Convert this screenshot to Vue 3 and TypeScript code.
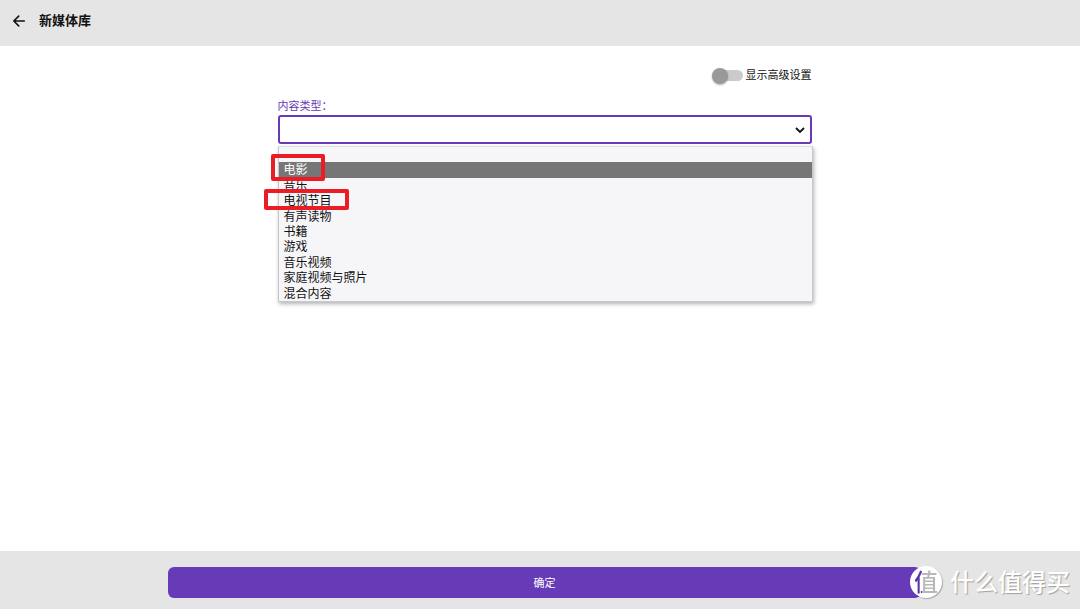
<script setup lang="ts">
import { ref } from 'vue'

interface ContentType {
  value: string
  label: string
  mark?: string
}

const contentTypes: ContentType[] = [
  { value: '', label: '' },
  { value: 'movies', label: '电影', mark: 'mark-movies' },
  { value: 'music', label: '音乐' },
  { value: 'tvshows', label: '电视节目', mark: 'mark-shows' },
  { value: 'audiobooks', label: '有声读物' },
  { value: 'books', label: '书籍' },
  { value: 'games', label: '游戏' },
  { value: 'musicvideos', label: '音乐视频' },
  { value: 'homevideos', label: '家庭视频与照片' },
  { value: 'mixed', label: '混合内容' },
]

const selected = ref('')
const highlighted = ref('movies')
const advanced = ref(false)
</script>

<template>
  <div class="page">
    <header class="top">
      <button class="back" type="button" aria-label="返回">
        <svg viewBox="0 0 14 14" width="14" height="14" aria-hidden="true">
          <path d="M12.3 7H2M6.7 2.1L1.8 7l4.9 4.9" fill="none" stroke="#111" stroke-width="1.6" stroke-linecap="round" stroke-linejoin="round" />
        </svg>
      </button>
      <h1>新媒体库</h1>
    </header>

    <main>
      <form id="library" class="form" @submit.prevent>
        <label class="toggle">
          <input v-model="advanced" type="checkbox" role="switch" />
          <span>显示高级设置</span>
        </label>

        <label class="field-label" for="content-type">内容类型：</label>
        <div class="field">
          <select id="content-type" v-model="selected">
            <option v-for="t in contentTypes" :key="t.value" :value="t.value">{{ t.label }}</option>
          </select>
          <svg class="chevron" viewBox="0 0 10 8" width="10" height="8" aria-hidden="true">
            <path d="M1 2l4 4 4-4" fill="none" stroke="#111" stroke-width="1.8" />
          </svg>
          <ul class="options" role="listbox" aria-label="内容类型">
            <li
              v-for="t in contentTypes"
              :key="t.value"
              role="option"
              :aria-selected="t.value === highlighted"
              :class="{ active: t.value === highlighted }"
              @mouseenter="highlighted = t.value"
            >
              {{ t.label }}
              <span v-if="t.mark" class="mark" :class="t.mark"></span>
            </li>
          </ul>
        </div>
      </form>
    </main>

    <footer class="bottom">
      <button class="confirm" type="submit" form="library">确定</button>
      <div class="watermark">
        <span class="badge"><span class="badge-char">值</span></span>
        <span class="brand">什么值得买</span>
      </div>
    </footer>
  </div>
</template>

<style>
body {
  margin: 0;
}
</style>

<style scoped>
.page {
  min-height: 100vh;
  display: flex;
  flex-direction: column;
  background: #fff;
  color: #111;
  font-family: "Noto Sans CJK SC", sans-serif;
  font-size: 12px;
}

.top {
  display: flex;
  align-items: center;
  gap: 13px;
  height: 42px;
  padding: 0 12px 4px;
  background: #e5e5e5;
}

.back {
  display: flex;
  padding: 0;
  border: 0;
  background: none;
}

h1 {
  margin: 0;
  font-size: 13px;
  line-height: 18px;
  padding-bottom: 2px;
  font-weight: 700;
}

main {
  flex: 1;
  padding: 20px 0 0 9px;
}

.form {
  display: flex;
  flex-direction: column;
  width: 50%;
  max-width: 534px;
  margin: 0 auto;
}

.toggle {
  display: flex;
  align-items: center;
  align-self: flex-end;
  gap: 3px;
  font-size: 11px;
  line-height: 16px;
}

.toggle span {
  padding-bottom: 2px;
}

.toggle input {
  appearance: none;
  position: relative;
  width: 29px;
  height: 11px;
  margin: 0;
  border-radius: 6px;
  background: #cbcbcb;
}

.toggle input::before {
  content: "";
  position: absolute;
  left: -2px;
  top: -2px;
  width: 16px;
  height: 16px;
  border-radius: 50%;
  background: #999;
  box-shadow: 0 1px 2px rgba(0, 0, 0, 0.3);
}

.toggle input:checked::before {
  left: 16px;
  background: #673ab7;
}

.field-label {
  margin-top: 13px;
  padding-bottom: 2px;
  color: #673ab7;
  font-size: 11px;
  line-height: 16px;
}

.field {
  position: relative;
}

select {
  appearance: none;
  display: block;
  box-sizing: border-box;
  width: 100%;
  height: 29px;
  padding: 0 24px 0 6px;
  border: 2px solid #673ab7;
  border-radius: 3px;
  background: #fff;
  font: inherit;
  outline: none;
}

.chevron {
  position: absolute;
  right: 7px;
  top: 11px;
  pointer-events: none;
}

.options {
  position: absolute;
  top: 100%;
  left: 0;
  right: -1px;
  display: grid;
  grid-template-rows: repeat(10, 1fr);
  height: 154px;
  margin: 2px 0 0;
  padding: 0;
  border: 1px solid #c8c8cc;
  border-top-color: #dddde2;
  background: #f6f6f9;
  box-shadow: 1px 2px 4px rgba(0, 0, 0, 0.3);
  list-style: none;
  line-height: 13px;
}

.options li {
  position: relative;
  min-height: 0;
  padding-left: 5px;
}

.options .active {
  background: #767676;
  color: #fff;
}

.mark {
  position: absolute;
  box-sizing: border-box;
  border: 4px solid #ea1c24;
  border-radius: 2px;
  z-index: 1;
}

.mark-movies {
  left: -8px;
  top: -8px;
  width: 54px;
  height: 27px;
}

.mark-shows {
  left: -15px;
  top: -4px;
  width: 85px;
  height: 21px;
}

.bottom {
  position: relative;
  display: flex;
  justify-content: center;
  padding: 16px 159px 11px 168px;
  background: #e5e5e5;
}

.confirm {
  flex: 1;
  height: 31px;
  padding: 0 0 2px;
  border: 0;
  border-radius: 6px;
  background: #673ab7;
  color: #fff;
  font-family: inherit;
  font-size: 11px;
}

.watermark {
  position: absolute;
  right: 10px;
  bottom: 11px;
  display: flex;
  align-items: center;
  gap: 8px;
}

.badge {
  display: flex;
  align-items: center;
  justify-content: center;
  width: 32px;
  height: 32px;
  border-radius: 50%;
  background: #fff;
  box-shadow: 1px 1px 1px rgba(0, 0, 0, 0.25);
}

.badge-char {
  padding-bottom: 3px;
  background: linear-gradient(90deg, #5b35a8 32%, #b8b8b8 33%);
  background-clip: text;
  color: transparent;
  font-size: 24px;
  line-height: 28px;
  font-weight: 500;
}

.brand {
  padding-bottom: 2px;
  color: #fff;
  font-size: 24px;
  line-height: 28px;
  font-weight: 500;
  text-shadow: 1px 1px 1px rgba(0, 0, 0, 0.3);
}
</style>
